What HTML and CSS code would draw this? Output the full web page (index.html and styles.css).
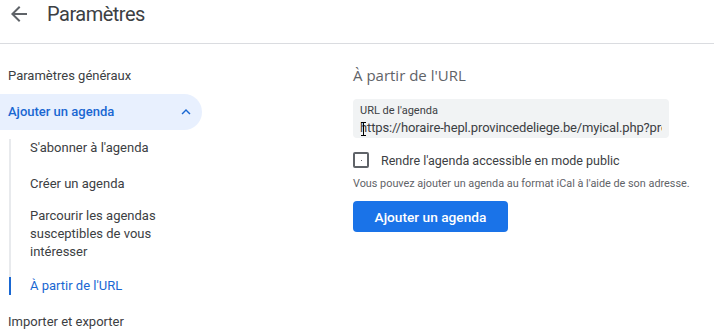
FILE: index.html
```html
<!DOCTYPE html>
<html lang="fr">
<head>
<meta charset="utf-8">
<title>Paramètres</title>
<link rel="stylesheet" href="styles.css">
</head>
<body>
<header class="topbar">
  <span class="back">
    <svg viewBox="0 0 24 24" width="24" height="24"><path d="M20 11H7.83l5.59-5.59L12 4l-8 8 8 8 1.41-1.41L7.83 13H20v-2z" fill="#5f6368"/></svg>
  </span>
  <h1 class="title">Paramètres</h1>
</header>
<div class="layout">
  <nav class="sidebar">
    <div class="nav-item">Paramètres généraux</div>
    <div class="nav-item active">
      <span>Ajouter un agenda</span>
      <svg class="chev" viewBox="0 0 24 24" width="18" height="18"><path d="M12 8l-6 6 1.41 1.41L12 10.83l4.59 4.58L18 14z" fill="#1967d2"/></svg>
    </div>
    <div class="sub-list">
      <div class="sub-item first">S'abonner à l'agenda</div>
      <div class="sub-item second">Créer un agenda</div>
      <div class="sub-item">Parcourir les agendas<br>susceptibles de vous<br>intéresser</div>
      <div class="sub-item current">À partir de l'URL</div>
    </div>
    <div class="nav-item">Importer et exporter</div>
  </nav>
  <main class="main">
    <h2 class="heading">À partir de l'URL</h2>
    <div class="field">
      <div class="field-label">URL de l'agenda</div>
      <div class="field-value">https://horaire-hepl.provincedeliege.be/myical.php?prog=</div>
      <svg class="ibeam" viewBox="0 0 7 14" width="7" height="14"><path d="M1 0.5h5M3.5 0.5v13M1 13.5h5" stroke="#000" stroke-width="1" fill="none"/></svg>
    </div>
    <label class="check-row">
      <span class="checkbox"><span class="dot"></span></span>
      <span class="check-text">Rendre l'agenda accessible en mode public</span>
    </label>
    <p class="help">Vous pouvez ajouter un agenda au format iCal à l'aide de son adresse.</p>
    <button class="btn">Ajouter un agenda</button>
  </main>
</div>
</body>
</html>
```

FILE: styles.css
```css
* { box-sizing: border-box; }
html, body { margin: 0; padding: 0; background: #fff; }
body {
  font-family: Roboto, "Liberation Sans", Arial, sans-serif;
  color: #3c4043;
  width: 714px;
  height: 334px;
  overflow: hidden;
}
.topbar {
  height: 44px;
  border-bottom: 1px solid #dadce0;
  display: flex;
  align-items: flex-start;
  padding: 2px 0 0 7px;
}
.back { display: flex; width: 24px; height: 24px; }
.title {
  margin: 0 0 0 16px;
  font-size: 20px;
  font-weight: 400;
  letter-spacing: -0.5px;
  color: #3c4043;
  line-height: 24px;
}
.layout { display: flex; }
.sidebar {
  width: 202px;
  padding-top: 14px;
  font-size: 13px;
}
.nav-item {
  height: 36px;
  display: flex;
  align-items: center;
  justify-content: space-between;
  padding: 0 7px 0 8px;
  line-height: 18px;
}
.nav-item.active {
  background: #e8f0fe;
  color: #1967d2;
  font-weight: 500;
  border-radius: 0 18px 18px 0;
}
.chev { display: block; }
.sub-list {
  margin: 9px 0 9px 9px;
  border-left: 2px solid #e8eaed;
  display: flex;
  flex-direction: column;
  gap: 16px;
}
.sub-item {
  padding-left: 19px;
  line-height: 18px;
}
.sub-item.first { margin-bottom: 2px; }
.sub-item.second { margin-bottom: -2px; }
.sub-item.current {
  color: #1967d2;
  margin-left: -2px;
  border-left: 2px solid #1967d2;
  padding-left: 19px;
}
.main {
  padding: 19px 0 0 151px;
}
.heading {
  margin: 0;
  font-family: "Open Sans", Roboto, sans-serif;
  font-size: 15px;
  font-weight: 400;
  line-height: 24px;
  color: #5f6368;
}
.field {
  position: relative;
  margin-top: 12px;
  width: 316px;
  height: 39px;
  background: #f1f3f4;
  border-radius: 4px;
  padding: 5px 7px 0 7px;
  overflow: hidden;
}
.field-label {
  font-size: 11px;
  line-height: 14px;
  color: #3c4043;
}
.field-value {
  font-size: 13px;
  letter-spacing: -0.14px;
  line-height: 19px;
  white-space: nowrap;
  overflow: hidden;
  color: #3c4043;
}
.ibeam { position: absolute; left: 7px; top: 23px; }
.check-row {
  display: flex;
  align-items: center;
  margin-top: 13px;
  height: 18px;
}
.checkbox {
  width: 16px;
  height: 16px;
  border: 2px solid #5f6368;
  border-radius: 2px;
  display: flex;
  align-items: center;
  justify-content: center;
}
.dot { width: 1px; height: 1px; background: #5f6368; }
.check-text {
  margin-left: 12px;
  font-size: 12.5px;
  color: #3c4043;
}
.help {
  margin: 7px 0 0;
  font-size: 10.85px;
  line-height: 16px;
  color: #5f6368;
}
.btn {
  margin-top: 9px;
  width: 155px;
  height: 31px;
  border: 0;
  border-radius: 4px;
  background: #1a73e8;
  color: #fff;
  font-family: Roboto, "Liberation Sans", sans-serif;
  font-size: 13.7px;
  font-weight: 500;
  padding: 0;
}
```
